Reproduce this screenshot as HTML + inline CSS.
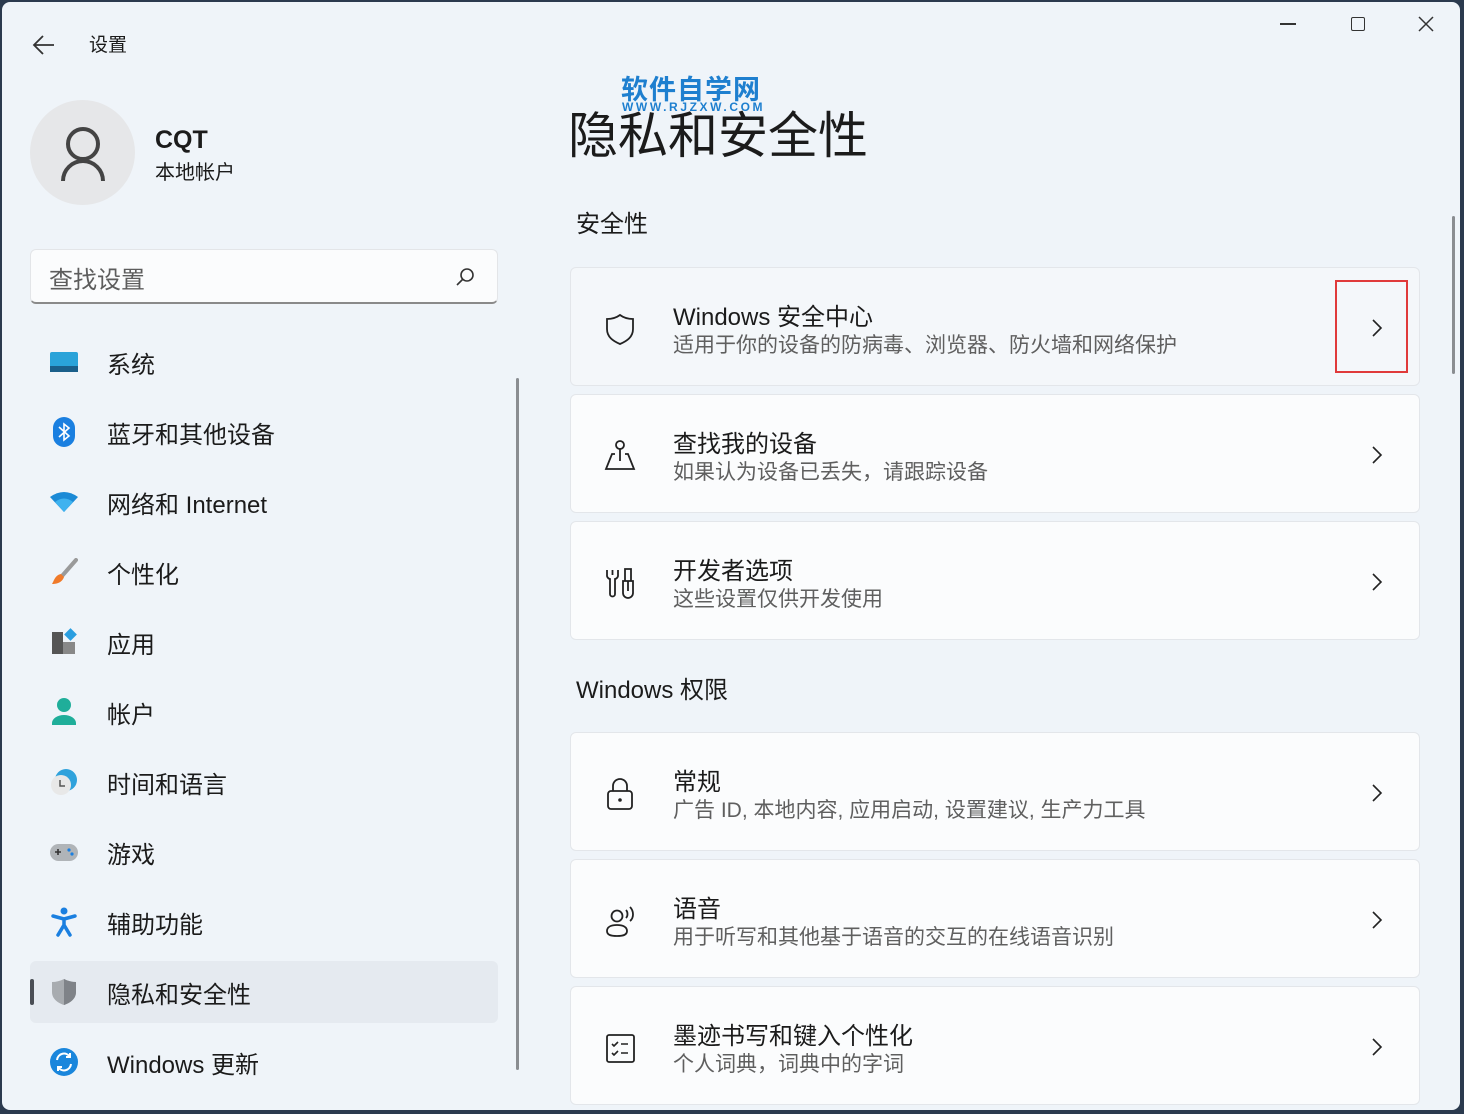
<!DOCTYPE html>
<html><head><meta charset="utf-8"><style>
*{box-sizing:border-box;margin:0;padding:0}
html,body{width:1464px;height:1114px;overflow:hidden;background:#2b3a4e}
body{font-family:"Liberation Sans","Noto Sans CJK SC",sans-serif;color:#1b1b1b;position:relative}
.win{position:absolute;left:2px;top:2px;width:1458px;height:1108px;background:#eff4f9;border-radius:8px;overflow:hidden}
.abs{position:absolute}
.nav{position:absolute;left:28px;height:62px;width:468px;display:flex;align-items:center;font-size:24px;border-radius:6px}
.nav .ic{width:30px;height:30px;margin-left:19px;margin-right:28px;display:flex;align-items:center;justify-content:center}
.nav.sel{background:#e5eaf0}
.card{position:absolute;left:568px;width:850px;height:119px;background:#fbfcfd;border:1px solid #e3e6ea;border-radius:6px}
.card .ic{position:absolute;left:32px;top:44px;width:34px;height:34px}
.card .t{position:absolute;left:102px;top:29px;font-size:24px;color:#1b1b1b}
.card .s{position:absolute;left:102px;top:61px;font-size:21px;color:#5f5f5f}
.h2{position:absolute;left:574px;font-size:24px;color:#1b1b1b}
</style></head><body>
<div class="win">
<svg class="abs" style="left:30px;top:32px" width="24" height="22" viewBox="0 0 24 22"><path d="M22 11H3M11 2L2 11l9 9" fill="none" stroke="#333" stroke-width="1.8"/></svg>
<div class="abs" style="left:87px;top:28px;font-size:19px">设置</div>
<div class="abs" style="left:1278px;top:21px;width:16px;height:1.5px;background:#333"></div>
<div class="abs" style="left:1349px;top:15px;width:14px;height:14px;border:1.5px solid #333;border-radius:2px"></div>
<svg class="abs" style="left:1416px;top:14px" width="16" height="16"><path d="M1 1L15 15M15 1L1 15" stroke="#333" stroke-width="1.5"/></svg>
<div class="abs" style="left:28px;top:98px;width:105px;height:105px;border-radius:50%;background:#e6e7e9"></div>
<svg class="abs" style="left:58px;top:125px" width="48" height="56" viewBox="0 0 48 56"><circle cx="23" cy="17" r="15" fill="none" stroke="#444" stroke-width="4"/><path d="M3 54a20 20 0 0 1 40 0" fill="none" stroke="#444" stroke-width="4"/></svg>
<div class="abs" style="left:153px;top:124px;font-size:25px;font-weight:bold">CQT</div>
<div class="abs" style="left:153px;top:154px;font-size:20px">本地帐户</div>
<div class="abs" style="left:28px;top:247px;width:468px;height:55px;background:#fbfcfd;border:1px solid #e3e5e8;border-bottom:2px solid #8a8a8a;border-radius:6px"></div>
<div class="abs" style="left:47px;top:258px;font-size:24px;color:#5d5d5d">查找设置</div>
<svg class="abs" style="left:453px;top:265px" width="20" height="20"><circle cx="12" cy="8" r="6" fill="none" stroke="#333" stroke-width="1.6"/><path d="M8 12L2 18" stroke="#333" stroke-width="1.6"/></svg>
<div class="nav" style="top:329px"><div class="ic"><svg width="30" height="22"><rect x="1" y="1" width="28" height="20" rx="2" fill="#2aa3d9"/><rect x="1" y="15" width="28" height="6" fill="#1a5f8a"/></svg></div>系统</div>
<div class="nav" style="top:399px"><div class="ic"><svg width="24" height="30"><rect x="1" y="0" width="22" height="30" rx="11" fill="#1a7fe0"/><path d="M7 10l10 9-5 4V7l5 4-10 9" fill="none" stroke="#fff" stroke-width="1.6"/></svg></div>蓝牙和其他设备</div>
<div class="nav" style="top:469px"><div class="ic"><svg width="30" height="22"><path d="M1 6Q15-4 29 6L15 21Z" fill="#1b8ad6"/><path d="M6 11Q15 4 24 11L15 21Z" fill="#3fb2ef"/></svg></div>网络和 Internet</div>
<div class="nav" style="top:539px"><div class="ic"><svg width="28" height="28"><path d="M26 2L12 18" stroke="#9a9a9a" stroke-width="4" stroke-linecap="round"/><path d="M11 16l3 3c-2 6-8 7-12 7 2-3 3-9 9-10z" fill="#f07a2a"/></svg></div>个性化</div>
<div class="nav" style="top:609px"><div class="ic"><svg width="26" height="28"><rect x="1" y="4" width="11" height="22" fill="#555"/><rect x="12" y="14" width="12" height="12" fill="#888"/><rect x="15" y="2" width="9" height="9" transform="rotate(45 19.5 6.5)" fill="#2a9ee0"/></svg></div>应用</div>
<div class="nav" style="top:679px"><div class="ic"><svg width="26" height="30"><circle cx="13" cy="8" r="7" fill="#1fae9a"/><path d="M1 26a12 8 0 0 1 24 0v2H1z" fill="#1fae9a"/></svg></div>帐户</div>
<div class="nav" style="top:749px"><div class="ic"><svg width="28" height="28"><circle cx="16" cy="12" r="11" fill="#2fa2dc"/><circle cx="11" cy="17" r="10" fill="#e8e8e8"/><path d="M10 12v6h5" fill="none" stroke="#555" stroke-width="1.5"/></svg></div>时间和语言</div>
<div class="nav" style="top:819px"><div class="ic"><svg width="30" height="22"><rect x="1" y="3" width="28" height="17" rx="8.5" fill="#b0b4b8"/><path d="M6 11h6M9 8v6" stroke="#333" stroke-width="1.6"/><circle cx="20" cy="9" r="1.6" fill="#1a7fe0"/><circle cx="23" cy="13" r="1.6" fill="#1a7fe0"/></svg></div>游戏</div>
<div class="nav" style="top:889px"><div class="ic"><svg width="26" height="30"><circle cx="13" cy="4" r="3.5" fill="#1a7fe0"/><path d="M2 9l11 3 11-3M13 12v6l-6 10M13 18l6 10" fill="none" stroke="#1a7fe0" stroke-width="3.5" stroke-linecap="round"/></svg></div>辅助功能</div>
<div class="nav sel" style="top:959px"><div class="abs" style="left:0;top:18px;width:4px;height:26px;border-radius:2px;background:#4a4e55"></div><div class="ic"><svg width="26" height="28"><path d="M13 1C9 3 5 4 1 4v10c0 7 6 11 12 13 6-2 12-6 12-13V4c-4 0-8-1-12-3z" fill="#a8acb0"/><path d="M13 1v26c6-2 12-6 12-13V4c-4 0-8-1-12-3z" fill="#7f8388"/></svg></div>隐私和安全性</div>
<div class="nav" style="top:1029px"><div class="ic"><svg width="30" height="30"><circle cx="15" cy="15" r="14" fill="#1a86dc"/><path d="M8 13a7 7 0 0 1 13-3M22 17a7 7 0 0 1-13 3M21 6v4h-4M9 24v-4h4" fill="none" stroke="#fff" stroke-width="2"/></svg></div>Windows 更新</div>
<div class="abs" style="left:514px;top:376px;width:3px;height:692px;background:#8a8d91;border-radius:2px"></div>
<div class="abs" style="left:619px;top:66px;font-size:27px;font-weight:bold;color:#1e7fcf;letter-spacing:1px">软件自学网</div>
<div class="abs" style="left:620px;top:98px;font-size:12px;font-weight:bold;color:#1e7fcf;letter-spacing:2.6px">WWW.RJZXW.COM</div>
<div class="abs" style="left:566px;top:94px;font-size:50px;color:#1b1b1b">隐私和安全性</div>
<div class="h2" style="top:202px">安全性</div>
<div class="h2" style="top:668px">Windows 权限</div>
<div class="card" style="top:265px;background:#f4f7fa"><svg class="ic" viewBox="0 0 34 34"><path d="M17 3C13 6 8 7 4 7v10c0 8 6 12 13 15 7-3 13-7 13-15V7c-4 0-9-1-13-4z" fill="none" stroke="#222" stroke-width="1.8"/></svg><div class="t">Windows 安全中心</div><div class="s">适用于你的设备的防病毒、浏览器、防火墙和网络保护</div></div>
<div class="abs" style="left:1333px;top:278px;width:73px;height:93px;border:2.5px solid #e03a3a"></div>
<div class="card" style="top:392px"><svg class="ic" viewBox="0 0 34 34"><circle cx="17" cy="6" r="4" fill="none" stroke="#222" stroke-width="1.8"/><path d="M17 10v12M12 15H9L3 30h28l-6-15h-3" fill="none" stroke="#222" stroke-width="1.8"/></svg><div class="t">查找我的设备</div><div class="s">如果认为设备已丢失，请跟踪设备</div></div>
<div class="card" style="top:519px"><svg class="ic" viewBox="0 0 34 34"><path d="M4 4v6a4 4 0 0 0 3 3v15a2.5 2.5 0 0 0 5 0V13a4 4 0 0 0 3-3V4M9.5 4v5M22 3h6v12h-6zM20 15h10v12a5 5 0 0 1-10 0zM25 15v10" fill="none" stroke="#222" stroke-width="1.8"/></svg><div class="t">开发者选项</div><div class="s">这些设置仅供开发使用</div></div>
<div class="card" style="top:730px"><svg class="ic" viewBox="0 0 34 34"><rect x="5" y="14" width="24" height="18" rx="3" fill="none" stroke="#222" stroke-width="1.8"/><path d="M10 14V9a7 7 0 0 1 14 0v5" fill="none" stroke="#222" stroke-width="1.8"/><circle cx="17" cy="23" r="1.8" fill="#222"/></svg><div class="t">常规</div><div class="s">广告 ID, 本地内容, 应用启动, 设置建议, 生产力工具</div></div>
<div class="card" style="top:857px"><svg class="ic" viewBox="0 0 34 34"><circle cx="14" cy="12" r="5.5" fill="none" stroke="#222" stroke-width="1.8"/><path d="M4 27c0-4 4-6 10-6s10 2 10 6-4 5-10 5-10-1-10-5zM23 6c2 2 2 6 0 8M27 3c4 4 4 11 0 14" fill="none" stroke="#222" stroke-width="1.8"/></svg><div class="t">语音</div><div class="s">用于听写和其他基于语音的交互的在线语音识别</div></div>
<div class="card" style="top:984px"><svg class="ic" viewBox="0 0 34 34"><rect x="4" y="4" width="27" height="27" rx="2" fill="none" stroke="#222" stroke-width="1.8"/><path d="M9 13l2 2 4-4M9 22l2 2 4-4M18 13h7M18 22h7" fill="none" stroke="#222" stroke-width="1.6"/></svg><div class="t">墨迹书写和键入个性化</div><div class="s">个人词典，词典中的字词</div></div>
<svg class="abs" style="left:1369px;top:316px" width="12" height="20"><path d="M2 2l8 8-8 8" fill="none" stroke="#222" stroke-width="1.6"/></svg>
<svg class="abs" style="left:1369px;top:443px" width="12" height="20"><path d="M2 2l8 8-8 8" fill="none" stroke="#222" stroke-width="1.6"/></svg>
<svg class="abs" style="left:1369px;top:570px" width="12" height="20"><path d="M2 2l8 8-8 8" fill="none" stroke="#222" stroke-width="1.6"/></svg>
<svg class="abs" style="left:1369px;top:781px" width="12" height="20"><path d="M2 2l8 8-8 8" fill="none" stroke="#222" stroke-width="1.6"/></svg>
<svg class="abs" style="left:1369px;top:908px" width="12" height="20"><path d="M2 2l8 8-8 8" fill="none" stroke="#222" stroke-width="1.6"/></svg>
<svg class="abs" style="left:1369px;top:1035px" width="12" height="20"><path d="M2 2l8 8-8 8" fill="none" stroke="#222" stroke-width="1.6"/></svg>
<div class="abs" style="left:1450px;top:214px;width:3px;height:158px;background:#8a8d91;border-radius:2px"></div>
</div>
</body></html>
